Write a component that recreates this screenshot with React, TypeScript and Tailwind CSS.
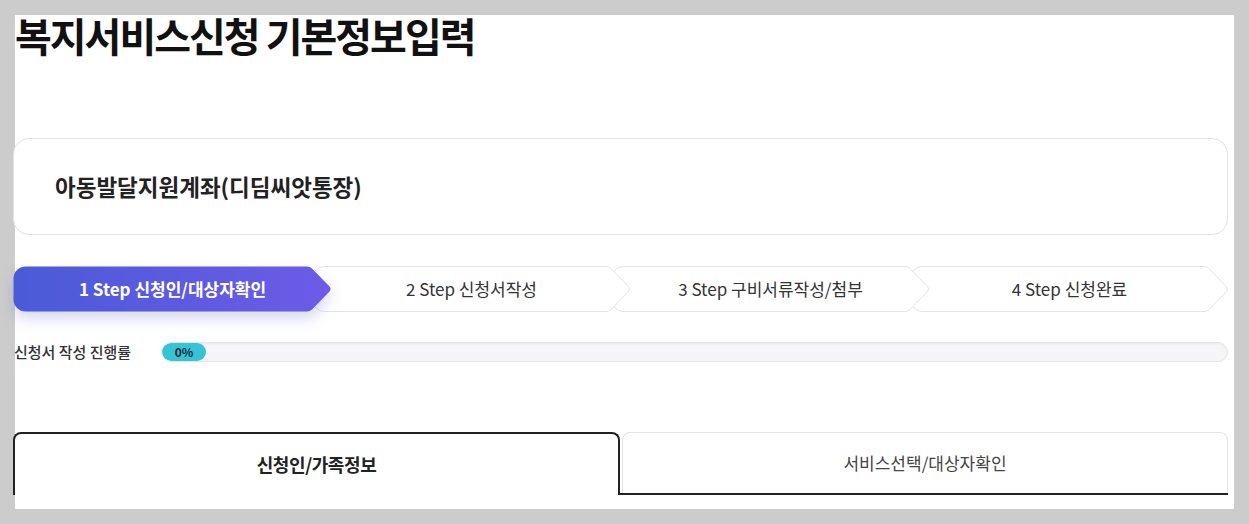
import React from 'react';

const steps = [
  { label: '1 Step 신청인/대상자확인', active: true, z: 'z-40' },
  { label: '2 Step 신청서작성', active: false, z: 'z-30' },
  { label: '3 Step 구비서류작성/첨부', active: false, z: 'z-20' },
  { label: '4 Step 신청완료', active: false, z: 'z-10' },
];

const STEP_PATH =
  'M12.5,0.5 H294 Q297,0.5 299,2.5 L316.5,20.5 Q318.5,23 316.5,25.5 L299,43.5 Q297,45.5 294,45.5 H12.5 A12,12 0 0 1 0.5,33.5 V12.5 A12,12 0 0 1 12.5,0.5 Z';

function StepShape({ active }: { active: boolean }) {
  return (
    <svg
      width="319"
      height="46"
      viewBox="0 0 319 46"
      className={`absolute inset-0 ${active ? '[filter:drop-shadow(0_7px_7px_rgba(70,80,190,0.22))]' : ''}`}
    >
      <defs>
        <linearGradient id="stepGrad" x1="0" y1="0" x2="1" y2="0">
          <stop offset="0" stopColor="#4a5bd7" />
          <stop offset="1" stopColor="#6d5be7" />
        </linearGradient>
      </defs>
      {active ? (
        <path d={STEP_PATH} fill="url(#stepGrad)" />
      ) : (
        <path d={STEP_PATH} fill="#ffffff" stroke="#e3e3e8" strokeWidth="1" />
      )}
    </svg>
  );
}

export default function App() {
  return (
    <div
      className="min-h-screen bg-[#cccccc] pt-[15px] pl-[15px]"
      style={{ fontFamily: '"Noto Sans CJK KR", "Noto Sans", sans-serif' }}
    >
      <div className="w-[1219px] h-[494px] bg-white">
        <div className="-ml-[2px] w-[1215px]">
          {/* page title */}
          <h1 className="pl-[2px] text-[40px] leading-none font-bold tracking-[-2px] text-[#111111]">
            복지서비스신청 기본정보입력
          </h1>

          {/* service card */}
          <div className="mt-[83px] h-[97px] rounded-[16px] border border-[#e2e2e7] bg-white flex items-center pl-[41px]">
            <span className="text-[22.5px] font-bold text-[#222222]">
              아동발달지원계좌(디딤씨앗통장)
            </span>
          </div>

          {/* steps */}
          <div className="mt-[31px] flex">
            {steps.map((s, i) => (
              <div
                key={s.label}
                className={`relative ${s.z} w-[319px] h-[46px] shrink-0 ${i > 0 ? '-ml-[20px]' : ''}`}
              >
                <StepShape active={s.active} />
                <span
                  className={`relative flex h-full items-center justify-center text-[17px] ${
                    s.active ? 'font-bold text-white' : 'text-[#333333]'
                  }`}
                >
                  {s.label}
                </span>
              </div>
            ))}
          </div>

          {/* progress */}
          <div className="mt-[30px] flex items-center h-[20px]">
            <span className="w-[148px] shrink-0 pl-[1px] text-[15px] text-[#333333] font-medium">
              신청서 작성 진행률
            </span>
            <div className="flex-1 h-[20px] rounded-full bg-[#f5f5f7] border border-[#e6e6ea] shadow-[inset_0_1px_2px_rgba(0,0,0,0.05)] overflow-hidden">
              <div className="w-[44px] h-full rounded-full bg-[#36c3d3] flex items-center justify-center text-[12px] font-bold text-[#1b2740] leading-none">
                0%
              </div>
            </div>
          </div>

          {/* tabs */}
          <div className="mt-[70px] flex h-[63px]">
            <div className="w-[607px] shrink-0 rounded-t-[8px] border-2 border-b-0 border-[#222222] bg-white flex items-center justify-center">
              <span className="text-[18px] font-bold text-[#222222] tracking-[-0.4px]">신청인/가족정보</span>
            </div>
            <div className="flex-1 border-b-2 border-[#222222] flex">
              <div className="ml-[2px] flex-1 rounded-t-[8px] border border-b-0 border-[#e3e3e8] bg-white flex items-center justify-center">
                <span className="text-[17px] text-[#444444]">서비스선택/대상자확인</span>
              </div>
            </div>
          </div>
        </div>
      </div>
    </div>
  );
}
